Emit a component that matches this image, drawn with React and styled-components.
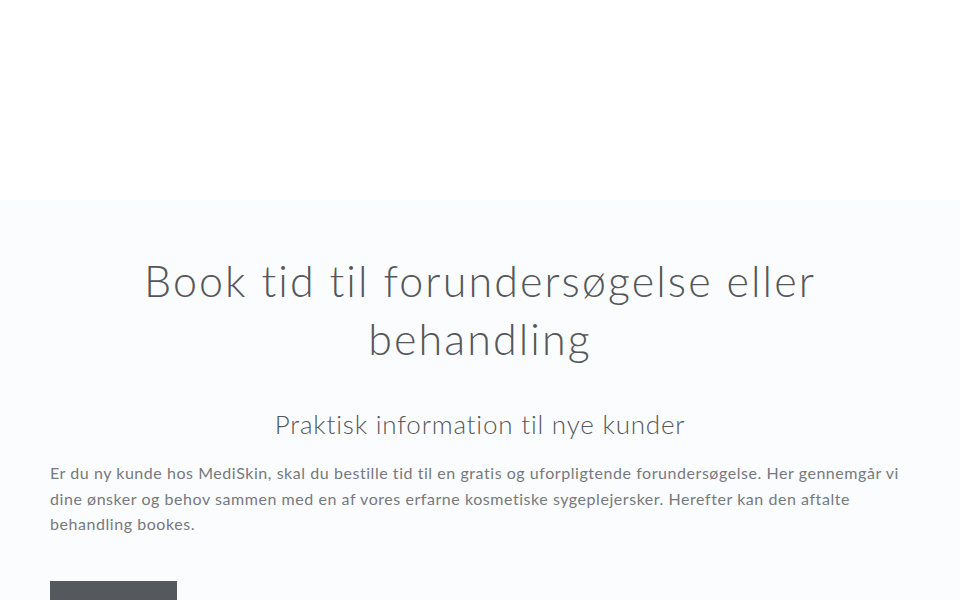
import React from "react";
import styled, { createGlobalStyle } from "styled-components";

const GlobalStyle = createGlobalStyle`
  html, body {
    margin: 0;
    padding: 0;
    background: #ffffff;
  }
  body {
    font-family: "Lato", "Liberation Sans", sans-serif;
  }
`;

const TopSpace = styled.div`
  height: 200px;
  background: #ffffff;
`;

const Section = styled.section`
  background: #fbfcfd;
  padding: 52px 50px 0 50px;
  min-height: 400px;
  box-sizing: border-box;
`;

const Title = styled.h1`
  margin: 0 auto;
  max-width: 720px;
  text-align: center;
  font-family: "Lato", sans-serif;
  font-weight: 300;
  font-size: 43px;
  line-height: 58px;
  letter-spacing: 2.1px;
  color: #54575b;
`;

const SubTitle = styled.h2`
  margin: 38px 0 0 0;
  text-align: center;
  font-family: "Lato", sans-serif;
  font-weight: 300;
  font-size: 26px;
  line-height: 36px;
  letter-spacing: 0.8px;
  color: #55585c;
`;

const Text = styled.p`
  margin: 18px 0 0 0;
  font-family: "Lato", sans-serif;
  font-weight: 400;
  font-size: 16px;
  line-height: 25.5px;
  letter-spacing: 0.55px;
  color: #76797d;
`;

const Button = styled.a`
  display: inline-block;
  margin-top: 44px;
  width: 127px;
  height: 40px;
  background: #55595d;
`;

const App = () => {
  return (
    <>
      <GlobalStyle />
      <TopSpace />
      <Section>
        <Title>Book tid til forundersøgelse eller behandling</Title>
        <SubTitle>Praktisk information til nye kunder</SubTitle>
        <Text>
          Er du ny kunde hos MediSkin, skal du bestille tid til en gratis og
          uforpligtende forundersøgelse. Her gennemgår vi dine ønsker og behov
          sammen med en af vores erfarne kosmetiske sygeplejersker. Herefter kan
          den aftalte behandling bookes.
        </Text>
        <Button />
      </Section>
    </>
  );
};

export default App;
